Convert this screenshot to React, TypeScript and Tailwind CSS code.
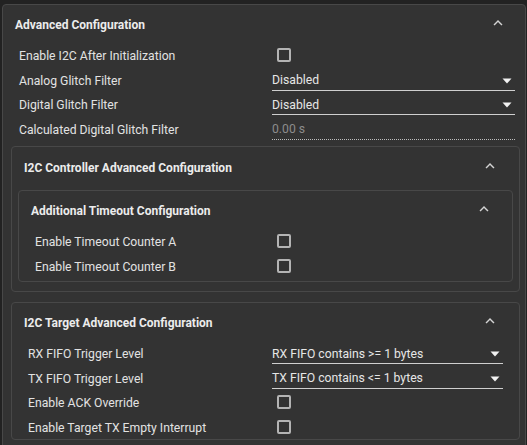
import React from 'react';

const font = { fontFamily: 'Roboto, "Liberation Sans", sans-serif' };

function Chevron() {
  return (
    <svg width="18" height="18" viewBox="0 0 24 24" className="text-[#d4d4d4] mt-[-3px]">
      <path fill="currentColor" d="M7.41 15.41 12 10.83l4.59 4.58L18 14l-6-6-6 6z" />
    </svg>
  );
}

function Checkbox() {
  return (
    <div className="ml-[5px] w-[14px] h-[14px] rounded-[2px] border-2 border-[#b4b4b4]" />
  );
}

function Select({ value }: { value: string }) {
  return (
    <div className="flex-1 flex items-center justify-between pr-[3px] pt-[2px] h-[22px] border-b border-[#cfcfcf]">
      <span className="text-[12.2px] text-[#e6e6e6]">{value}</span>
      <svg width="10" height="6" viewBox="0 0 10 6" className="mt-[1px]">
        <path d="M0.5 0.5h9L5 5.5z" fill="#f2f2f2" />
      </svg>
    </div>
  );
}

function ReadOnly({ value }: { value: string }) {
  return (
    <div className="flex-1 h-[22px] pt-[2px] flex items-center border-b border-dotted border-[#bdbdbd]">
      <span className="text-[12.2px] text-[#8c8c8c]">{value}</span>
    </div>
  );
}

function Row({
  label,
  labelWidth,
  children,
}: {
  label: string;
  labelWidth: string;
  children: React.ReactNode;
}) {
  return (
    <div className="flex items-center h-[24.5px]">
      <div className={`${labelWidth} pt-[2px] text-[12.2px] text-[#e2e2e2] shrink-0`}>{label}</div>
      {children}
    </div>
  );
}

export default function App() {
  return (
    <div className="w-[527px] h-[445px] bg-[#222222] pt-1 pl-0.5 overflow-hidden" style={font}>
      <div className="w-[524px] h-[460px] bg-[#333333] border border-[#484848] rounded-[4px]">
        <div className="flex items-center justify-between h-[38px] pl-[12px] pr-[18px]">
          <span className="text-[12px] font-bold text-[#ececec] pt-[1px]">Advanced Configuration</span>
          <Chevron />
        </div>
        <div className="pl-4 pr-[10px]">
          <Row label="Enable I2C After Initialization" labelWidth="w-[253px]">
            <Checkbox />
          </Row>
          <Row label="Analog Glitch Filter" labelWidth="w-[253px]">
            <Select value="Disabled" />
          </Row>
          <Row label="Digital Glitch Filter" labelWidth="w-[253px]">
            <Select value="Disabled" />
          </Row>
          <Row label="Calculated Digital Glitch Filter" labelWidth="w-[253px]">
            <ReadOnly value="0.00 s" />
          </Row>
        </div>

        <div className="ml-[8px] mr-[5px] mt-[5px] border border-[#484848] rounded-[4px] pb-[9px]">
          <div className="flex items-center justify-between h-[40px] pl-[12px] pr-[20px]">
            <span className="text-[12px] font-bold text-[#ececec] pt-[1px]">I2C Controller Advanced Configuration</span>
            <Chevron />
          </div>
          <div className="mx-[6px] mt-[3px] border border-[#484848] rounded-[4px] pb-[3px]">
            <div className="flex items-center justify-between h-[38px] pl-[12px] pr-[19px]">
              <span className="text-[12px] font-bold text-[#ececec] pt-[1px]">Additional Timeout Configuration</span>
              <Chevron />
            </div>
            <div className="pl-4">
              <Row label="Enable Timeout Counter A" labelWidth="w-[237px]">
                <Checkbox />
              </Row>
              <Row label="Enable Timeout Counter B" labelWidth="w-[237px]">
                <Checkbox />
              </Row>
            </div>
          </div>
        </div>

        <div className="ml-[8px] mr-[5px] mt-[10px] border border-[#484848] rounded-[4px]">
          <div className="flex items-center justify-between h-[38px] pl-[12px] pr-[20px]">
            <span className="text-[12px] font-bold text-[#ececec] pt-[1px]">I2C Target Advanced Configuration</span>
            <Chevron />
          </div>
          <div className="pl-4 pr-4">
            <Row label="RX FIFO Trigger Level" labelWidth="w-[244px]">
              <Select value="RX FIFO contains >= 1 bytes" />
            </Row>
            <Row label="TX FIFO Trigger Level" labelWidth="w-[244px]">
              <Select value="TX FIFO contains <= 1 bytes" />
            </Row>
            <Row label="Enable ACK Override" labelWidth="w-[244px]">
              <Checkbox />
            </Row>
            <Row label="Enable Target TX Empty Interrupt" labelWidth="w-[244px]">
              <Checkbox />
            </Row>
          </div>
        </div>
      </div>
    </div>
  );
}
